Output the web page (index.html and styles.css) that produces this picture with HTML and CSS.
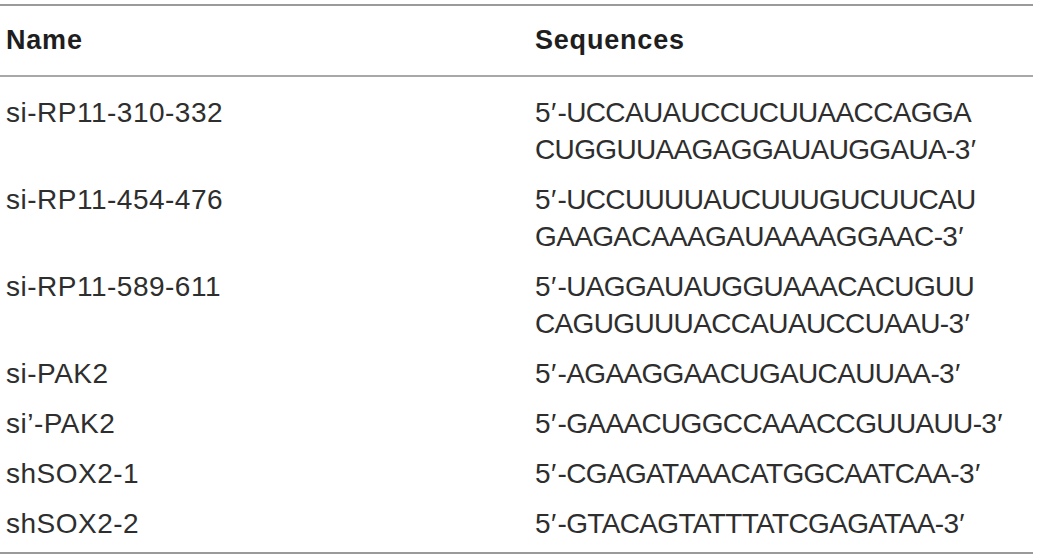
FILE: index.html
```html
<!DOCTYPE html>
<html>
<head>
<meta charset="utf-8">
<link rel="stylesheet" href="styles.css">
</head>
<body>
<table class="seq-table">
  <thead>
    <tr><th class="col-name">Name</th><th class="col-seq">Sequences</th></tr>
  </thead>
  <tbody>
    <tr class="first"><td class="name">si-RP11-310-332</td><td class="seq">5<span class="pr">′</span>-UCCAUAUCCUCUUAACCAGGA<br>CUGGUUAAGAGGAUAUGGAUA-3<span class="pr">′</span></td></tr>
    <tr><td class="name">si-RP11-454-476</td><td class="seq">5<span class="pr">′</span>-UCCUUUUAUCUUUGUCUUCAU<br>GAAGACAAAGAUAAAAGGAAC-3<span class="pr">′</span></td></tr>
    <tr><td class="name">si-RP11-589-611</td><td class="seq">5<span class="pr">′</span>-UAGGAUAUGGUAAACACUGUU<br>CAGUGUUUACCAUAUCCUAAU-3<span class="pr">′</span></td></tr>
    <tr><td class="name">si-PAK2</td><td class="seq">5<span class="pr">′</span>-AGAAGGAACUGAUCAUUAA-3<span class="pr">′</span></td></tr>
    <tr><td class="name">si’-PAK2</td><td class="seq">5<span class="pr">′</span>-GAAACUGGCCAAACCGUUAUU-3<span class="pr">′</span></td></tr>
    <tr><td class="name">shSOX2-1</td><td class="seq">5<span class="pr">′</span>-CGAGATAAACATGGCAATCAA-3<span class="pr">′</span></td></tr>
    <tr class="last"><td class="name">shSOX2-2</td><td class="seq">5<span class="pr">′</span>-GTACAGTATTTATCGAGATAA-3<span class="pr">′</span></td></tr>
  </tbody>
</table>
</body>
</html>
```
FILE: styles.css
```css
html, body {
  margin: 0;
  padding: 0;
  background: #ffffff;
}
body {
  padding-top: 4px;
  font-family: "Liberation Sans", Arial, sans-serif;
}
.seq-table {
  width: 1033px;
  border-collapse: collapse;
  border-top: 2px solid #9a9a9a;
  border-bottom: 2px solid #9a9a9a;
}
.seq-table th {
  text-align: left;
  font-weight: bold;
  font-size: 27px;
  letter-spacing: 0.8px;
  color: #1e1e1e;
  height: 69px;
  padding: 0 0 0 6px;
  border-bottom: 2px solid #a8a8a8;
  vertical-align: middle;
}
.seq-table th.col-seq {
  padding-left: 0;
}
.seq-table td {
  font-size: 28px;
  line-height: 37px;
  color: #2e2e2e;
  padding: 6px 0 7px 6px;
  vertical-align: top;
}
.seq-table td.name {
  width: 529px;
  letter-spacing: 0.5px;
}
.seq-table td.seq {
  padding-left: 0;
  letter-spacing: -0.65px;
}
.seq-table .pr {
  margin: 0 2px 0 1px;
}
.seq-table tr.first td {
  padding-top: 17px;
}
.seq-table tr.last td {
  padding-bottom: 10px;
}
.col-name {
  width: 529px;
}
```
